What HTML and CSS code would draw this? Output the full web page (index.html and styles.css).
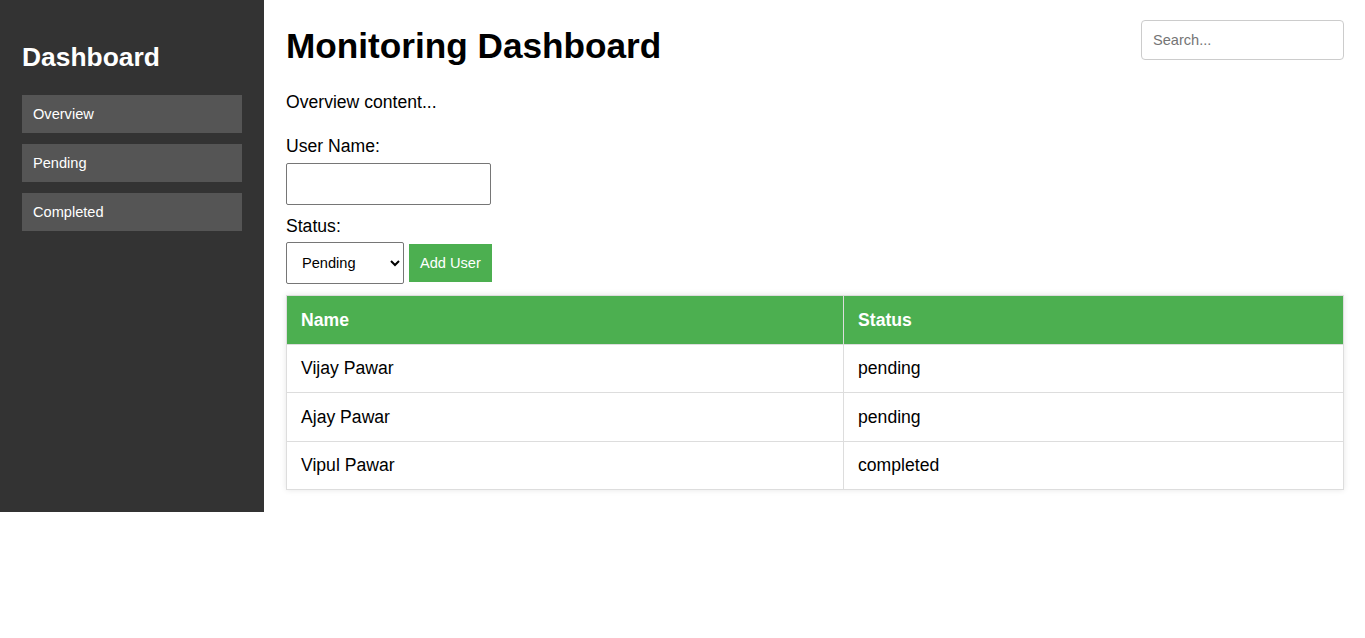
FILE: index.html
```html
<!DOCTYPE html>
<html lang="en">
<head>
<meta charset="utf-8">
<title>Monitoring Dashboard</title>
<link rel="stylesheet" href="styles.css">
</head>
<body>
<div class="layout">
  <aside class="sidebar">
    <h2 class="brand">Dashboard</h2>
    <nav class="nav">
      <a class="nav-item" href="#">Overview</a>
      <a class="nav-item" href="#">Pending</a>
      <a class="nav-item" href="#">Completed</a>
    </nav>
  </aside>
  <main class="main">
    <header class="header">
      <h1 class="title">Monitoring Dashboard</h1>
      <input class="search" type="text" placeholder="Search...">
    </header>
    <p class="intro">Overview content...</p>
    <label class="label label-name" for="username">User Name:</label>
    <input class="text-input" id="username" type="text">
    <label class="label label-status" for="status">Status:</label>
    <div class="form-row">
      <select class="select" id="status">
        <option>Pending</option>
        <option>Completed</option>
      </select>
      <button class="btn" type="button">Add User</button>
    </div>
    <table class="table">
      <thead>
        <tr><th class="col-name">Name</th><th>Status</th></tr>
      </thead>
      <tbody>
        <tr><td>Vijay Pawar</td><td>pending</td></tr>
        <tr><td>Ajay Pawar</td><td>pending</td></tr>
        <tr><td>Vipul Pawar</td><td>completed</td></tr>
      </tbody>
    </table>
  </main>
</div>
</body>
</html>
```
FILE: styles.css
```css
* { box-sizing: border-box; }
html, body { margin: 0; padding: 0; background: #fff; }
body {
  font-family: "Liberation Sans", Arial, sans-serif;
  font-size: 17.6px;
  color: #000;
}
.layout { display: flex; align-items: stretch; }
.sidebar {
  width: 264px;
  flex: 0 0 264px;
  background: #333;
  padding: 20px 22px 22px;
  color: #fff;
}
.brand {
  font-size: 26.4px;
  font-weight: bold;
  margin: 22px 0 22px;
  line-height: normal;
}
.nav { display: flex; flex-direction: column; gap: 11px; }
.nav-item {
  display: block;
  background: #555;
  color: #fff;
  text-decoration: none;
  font-size: 14.6px;
  line-height: 16.8px;
  padding: 10.6px 11px;
}
.main {
  flex: 1;
  padding: 20px 21px 22px 22px;
  min-width: 0;
}
.header {
  display: flex;
  justify-content: space-between;
  align-items: flex-start;
}
.title {
  font-size: 35.2px;
  font-weight: bold;
  margin: 6px 0 0;
  line-height: normal;
}
.search {
  width: 203px;
  height: 40px;
  border: 1px solid #ccc;
  border-radius: 4px;
  padding: 0 11px;
  font-family: inherit;
  font-size: 14.6px;
  color: #000;
  outline: none;
}
.search::placeholder { color: #757575; }
.intro { margin: 26px 0 0; line-height: normal; }
.label { display: block; line-height: normal; }
.label-name { margin-top: 23px; }
.text-input {
  display: block;
  margin-top: 6px;
  width: 205px;
  height: 42px;
  border: 1px solid #767676;
  border-radius: 2px;
  font-family: inherit;
  font-size: 14.6px;
  padding: 0 8px;
}
.label-status { margin-top: 11px; }
.form-row {
  display: flex;
  align-items: center;
  gap: 5px;
  margin-top: 5px;
}
.select {
  width: 118px;
  height: 42px;
  border: 1px solid #767676;
  border-radius: 2px;
  background: #fff;
  font-family: inherit;
  font-size: 14.6px;
  padding: 0 8px 0 11px;
  color: #000;
}
.btn {
  height: 38px;
  padding: 0 11px;
  border: none;
  background: #4caf50;
  color: #fff;
  font-family: inherit;
  font-size: 14.6px;
  cursor: pointer;
}
.table {
  margin-top: 11px;
  width: 100%;
  border-collapse: collapse;
  box-shadow: 0 0 6px rgba(0, 0, 0, 0.1);
  background: #fff;
}
.table th, .table td {
  border: 1px solid #ddd;
  padding: 13.75px 14px;
  text-align: left;
  line-height: 20px;
  font-size: 17.6px;
}
.table th {
  background: #4caf50;
  color: #fff;
  font-weight: bold;
}
.col-name { width: 52.7%; }
```
